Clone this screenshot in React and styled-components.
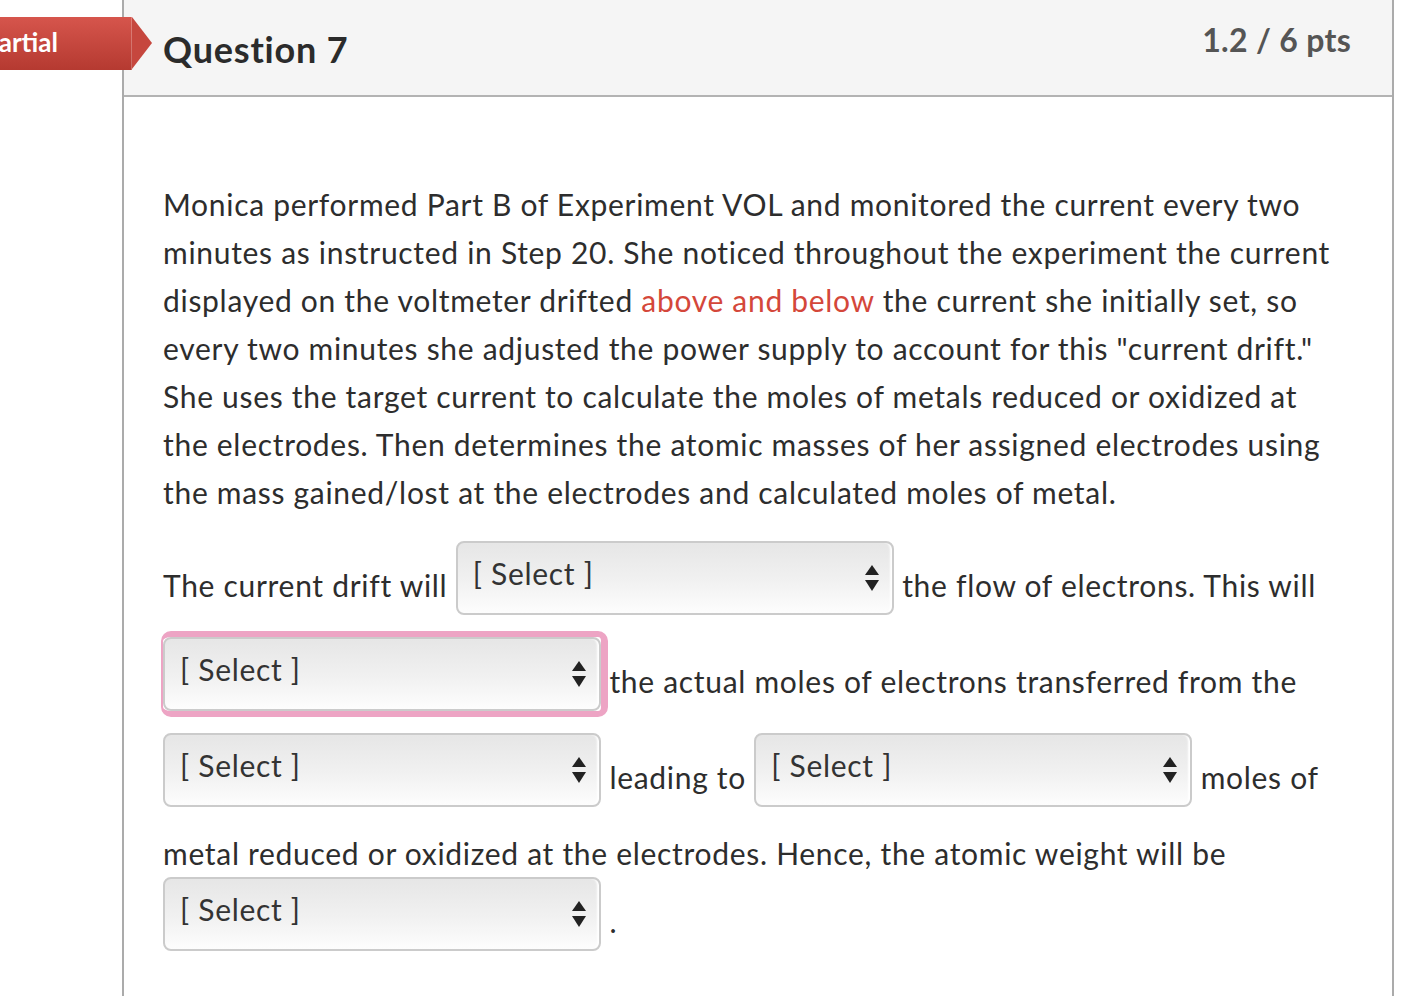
import React from 'react'
import styled, { createGlobalStyle } from 'styled-components'

const GlobalStyle = createGlobalStyle`
  html, body {
    margin: 0;
    padding: 0;
    background: #fff;
  }
  body {
    font-family: Lato, "Noto Sans", sans-serif;
    color: #2d2d2d;
    overflow: hidden;
  }
`

const Page = styled.div`
  position: relative;
  width: 1412px;
  height: 996px;
  overflow: hidden;
`

const Panel = styled.div`
  margin-left: 122px;
  width: 1268px;
  min-height: 996px;
  border-left: 2px solid #ababab;
  border-right: 2px solid #ababab;
`

const Header = styled.div`
  display: flex;
  justify-content: space-between;
  align-items: flex-start;
  height: 95px;
  padding: 0 41px 0 39px;
  background: #f5f5f5;
  border-bottom: 2px solid #b3b3b3;
`

const Title = styled.h2`
  margin: 27px 0 0;
  font-size: 36px;
  font-weight: 700;
  letter-spacing: 0.8px;
  line-height: 44px;
  color: #2b2b2b;
`

const Points = styled.div`
  margin-top: 19px;
  font-size: 32px;
  font-weight: 700;
  letter-spacing: 0.3px;
  line-height: 42px;
  color: #555;
`

const Badge = styled.div`
  position: absolute;
  top: 17px;
  left: -20px;
  height: 53px;
  width: 152px;
  display: flex;
  align-items: center;
  padding-left: 3px;
  padding-bottom: 3px;
  box-sizing: border-box;
  background: linear-gradient(#d6554c, #b53a31);
  color: #fff;
  font-size: 26px;
  font-weight: 700;
  box-shadow: inset -1px 0 0 rgba(255, 255, 255, 0.25);
  &::after {
    content: '';
    position: absolute;
    right: -20px;
    top: 0;
    width: 0;
    height: 0;
    border-top: 26.5px solid transparent;
    border-bottom: 26.5px solid transparent;
    border-left: 20px solid #c6473e;
  }
`

const Body = styled.div`
  padding: 83px 45px 40px 39px;
  font-size: 30px;
  letter-spacing: 0.7px;
  line-height: 48px;
  color: #2d2d2d;
`

const Para = styled.p`
  margin: 0 0 25px;
`

const Red = styled.span`
  color: #d4473a;
`

const Picker = styled.span`
  position: relative;
  display: inline-block;
  box-sizing: border-box;
  width: 438px;
  height: 74px;
  margin-bottom: 22px;
  vertical-align: middle;
  padding: 0 0 0 15px;
  border: 2px solid #cbcbcb;
  border-radius: 8px;
  background: linear-gradient(#e6e6e6, #f1f1f1 55%, #fdfdfd);
  box-shadow: inset -3px 0 2px -1px #fff;
  line-height: 66px;
  color: #333;
  ${p => p.$focus && `
    &::before {
      content: '';
      position: absolute;
      top: -8px;
      bottom: -8px;
      left: -4px;
      right: -9px;
      border-style: solid;
      border-color: #eda4c4;
      border-width: 6px 7px 6px 2px;
      border-radius: 10px;
    }
  `}
`

const PickerText = styled.span`
  position: relative;
  top: -3px;
`

const Arrows = styled.svg`
  position: absolute;
  right: 13px;
  top: 22px;
`

const Select = ({ focus }) => (
  <Picker $focus={focus}>
    <PickerText>[ Select ]</PickerText>
    <Arrows width="14" height="26" viewBox="0 0 14 26">
      <path d="M7 0 L14 10 L0 10 Z" fill="#222" />
      <path d="M0 15 L14 15 L7 26 Z" fill="#222" />
    </Arrows>
  </Picker>
)

export default function App() {
  return (
    <Page>
      <GlobalStyle />
      <Panel>
        <Header>
          <Title>Question 7</Title>
          <Points>1.2 / 6 pts</Points>
        </Header>
        <Body>
          <Para>
            Monica performed Part B of Experiment VOL and monitored the current every two
            minutes as instructed in Step 20. She noticed throughout the experiment the current
            displayed on the voltmeter drifted <Red>above and below</Red> the current she initially set, so
            every two minutes she adjusted the power supply to account for this "current drift."
            She uses the target current to calculate the moles of metals reduced or oxidized at
            the electrodes. Then determines the atomic masses of her assigned electrodes using
            the mass gained/lost at the electrodes and calculated moles of metal.
          </Para>
          <Para>
            The current drift will <Select /> the flow of electrons. This will{' '}
            <Select focus /> the actual moles of electrons transferred from the{' '}
            <Select /> leading to <Select /> moles of metal reduced or oxidized at the
            electrodes. Hence, the atomic weight will be <Select /> .
          </Para>
        </Body>
      </Panel>
      <Badge>Partial</Badge>
    </Page>
  )
}
